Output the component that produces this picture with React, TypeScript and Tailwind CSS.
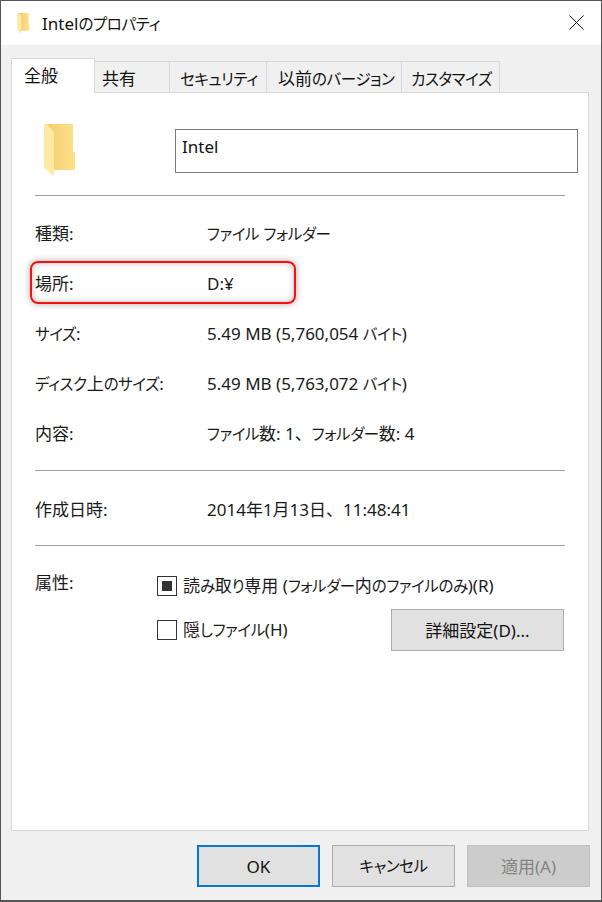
const font = {
  fontFamily: '"Noto Sans", "Noto Sans CJK JP", sans-serif',
  fontFeatureSettings: '"palt"',
};

// kana in the original UI font is much narrower than Noto's, so runs get squeezed
function T({ children }: { children: string }) {
  return (
    <>
      {children.split(/([\u3040-\u30ff]+|、)/).map((part, i) => {
        if (part === '、') return <span key={i} className="[font-feature-settings:normal]">{part}</span>;
        if (/^[\u3040-\u30ff]/.test(part)) return <span key={i} className="text-[15.5px] tracking-[-0.4px]">{part}</span>;
        return part;
      })}
    </>
  );
}

function Folder({ className }: { className: string }) {
  return (
    <svg viewBox="0 0 32 52" className={className}>
      <defs>
        <linearGradient id="back" x1="0" x2="1" y1="0" y2="0">
          <stop offset="0" stopColor="#f0cd6e" />
          <stop offset="1" stopColor="#ffe08a" />
        </linearGradient>
      </defs>
      <path d="M1 0H29V27L31 29V46H10V52L1 44Z" fill="url(#back)" />
      <path d="M0 0H3L5 3L8 5L10 9V52L8 51L6 48L0 43Z" fill="#ffe9a6" />
    </svg>
  );
}

function Tab({ label, className }: { label: string; className: string }) {
  return (
    <div className={`${className} h-[31px] border-t border-r border-[#d9d9d9] bg-[#f0f0f0] text-[17px] leading-[33px] text-[#111] whitespace-nowrap`}>
      <T>{label}</T>
    </div>
  );
}

function Row({ label, value }: { label: string; value: string }) {
  return (
    <div className="flex h-[50px] items-center pt-[1px] text-[17px] text-[#1a1a1a]">
      <div className="w-[172px] whitespace-nowrap"><T>{label}</T></div>
      <div className="whitespace-nowrap"><T>{value}</T></div>
    </div>
  );
}

function Btn({ label, className }: { label: string; className: string }) {
  return (
    <button className={`flex h-[42px] w-[123px] items-center justify-center pt-[2px] text-[17px] ${className}`}>
      <T>{label}</T>
    </button>
  );
}

export default function App() {
  return (
    <div style={font} className="relative flex h-[902px] w-[602px] flex-col overflow-hidden border-x border-t border-b-2 border-[#555] bg-white">
      {/* Title bar */}
      <div className="flex h-[44px] shrink-0 items-center bg-white pl-[15px] pr-[17px]">
        <Folder className="-mt-[1px] h-[20px] w-[15px] shrink-0" />
        <span className="ml-[11px] pt-[1px] text-[17px] text-[#111]"><T>Intelのプロパティ</T></span>
        <svg viewBox="0 0 15 15" className="-mt-[1px] ml-auto h-[15px] w-[15px]">
          <path d="M0.5 0.5L14.5 14.5M14.5 0.5L0.5 14.5" stroke="#111" strokeWidth="1" fill="none" />
        </svg>
      </div>

      <div className="flex min-h-0 flex-1 flex-col bg-[#f0f0f0] pl-[10px] pr-[12px] pt-[13px]">
        {/* Tabs */}
        <div className="relative z-10 flex h-[34px] shrink-0 items-end">
          <div className="-mb-[1px] h-[35px] w-[84px] border-x border-t border-[#d9d9d9] bg-white pl-[12px] text-[17px] leading-[33px] text-[#111]">全般</div>
          <Tab label="共有" className="w-[75px] pl-[7px]" />
          <Tab label="セキュリティ" className="w-[97px] pl-[10px]" />
          <Tab label="以前のバージョン" className="w-[135px] pl-[11px]" />
          <Tab label="カスタマイズ" className="w-[98px] pl-[9px]" />
        </div>

        {/* General page */}
        <div className="flex h-[739px] shrink-0 flex-col border border-[#d9d9d9] bg-white pl-[23px] pr-[23px]">
          <div className="flex h-[102px] shrink-0 items-start">
            <Folder className="ml-[9px] mt-[31px] h-[52px] w-[32px] shrink-0" />
            <div className="ml-[99px] mt-[36px] h-[44px] w-[403px] flex-none border border-[#7a7a7a] pl-[6px] text-[17px] leading-[33px] text-[#111]">Intel</div>
          </div>
          <div className="h-[1px] w-[530px] shrink-0 bg-[#a0a0a0]" />
          <div className="mt-[12px]">
            <Row label="種類:" value="ファイル フォルダー" />
            <Row label="場所:" value="D:¥" />
            <Row label="サイズ:" value="5.49 MB (5,760,054 バイト)" />
            <Row label="ディスク上のサイズ:" value="5.49 MB (5,763,072 バイト)" />
            <Row label="内容:" value="ファイル数: 1、フォルダー数: 4" />
          </div>
          <div className="mt-[12px] h-[1px] w-[530px] shrink-0 bg-[#a0a0a0]" />
          <div className="mt-[13px]">
            <Row label="作成日時:" value="2014年1月13日、11:48:41" />
          </div>
          <div className="mt-[11px] h-[1px] w-[530px] shrink-0 bg-[#a0a0a0]" />

          {/* Attributes */}
          <div className="mt-[28px] flex text-[17px] text-[#1a1a1a]">
            <div className="-mt-[3px] w-[122px] leading-[24px]">属性:</div>
            <div className="flex flex-col">
              <div className="flex h-[24px] items-center">
                <div className="flex h-[20px] w-[20px] items-center justify-center border border-[#333] bg-white">
                  <div className="h-[10px] w-[10px] bg-[#333]" />
                </div>
                <span className="ml-[6px] whitespace-nowrap"><T>読み取り専用 (フォルダー内のファイルのみ)(R)</T></span>
              </div>
              <div className="mt-[11px] flex w-[407px] items-center">
                <div className="h-[20px] w-[20px] border border-[#333] bg-white" />
                <span className="ml-[6px] whitespace-nowrap"><T>隠しファイル(H)</T></span>
                <Btn label="詳細設定(D)..." className="ml-auto w-[173px] border border-[#adadad] bg-[#e1e1e1] text-[#111]" />
              </div>
            </div>
          </div>
        </div>

        {/* Footer buttons */}
        <div className="-mr-[1px] mt-[14px] flex justify-end gap-[12px]">
          <Btn label="OK" className="border-2 border-[#0078d7] bg-[#e1e1e1] text-[#111]" />
          <Btn label="キャンセル" className="border border-[#adadad] bg-[#e1e1e1] text-[#111]" />
          <Btn label="適用(A)" className="border border-[#bfbfbf] bg-[#cccccc] text-[#838383]" />
        </div>
      </div>

      {/* Red annotation round the location row */}
      <div className="absolute left-[29px] top-[260px] h-[43px] w-[266px] rounded-[8px] border-2 border-[#f50f0f] shadow-[0_0_7px_rgba(0,0,0,0.35),inset_0_0_7px_rgba(0,0,0,0.25)]" />
    </div>
  );
}
